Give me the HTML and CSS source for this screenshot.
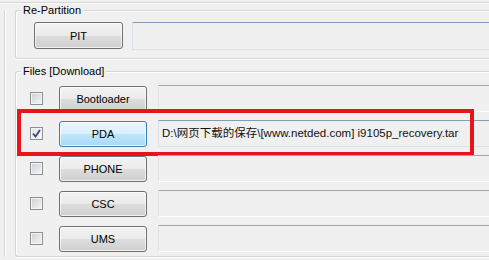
FILE: index.html
```html
<!DOCTYPE html>
<html lang="zh-CN">
<head>
  <meta charset="UTF-8">
  <title>Odin - Files</title>
  <link rel="stylesheet" href="styles.css">
</head>
<body>
  <div class="topline"></div>
  <div class="panel">
    <!-- Re-Partition -->
    <div class="group repart">
      <span class="group-title">Re-Partition</span>
      <div class="pit-row">
        <button type="button" class="btn pit">PIT</button>
        <div class="field blue"></div>
      </div>
    </div>

    <!-- Files [Download] -->
    <div class="group files">
      <span class="group-title">Files [Download]</span>
      <div class="file-row">
        <span class="check"></span>
        <button type="button" class="btn">Bootloader</button>
        <div class="field"></div>
      </div>
      <div class="file-row marked">
        <span class="check checked">
          <svg width="9" height="9" viewBox="0 0 9 9"><path d="M1 4.5 L3.5 7.5 L8 1" fill="none" stroke="#34448c" stroke-width="1.8"/></svg>
        </span>
        <button type="button" class="btn active">PDA</button>
        <div class="field blue">D:\网页下载的保存\[www.netded.com] i9105p_recovery.tar</div>
        <div class="highlight"></div>
      </div>
      <div class="file-row">
        <span class="check"></span>
        <button type="button" class="btn">PHONE</button>
        <div class="field"></div>
      </div>
      <div class="file-row">
        <span class="check"></span>
        <button type="button" class="btn">CSC</button>
        <div class="field"></div>
      </div>
      <div class="file-row">
        <span class="check"></span>
        <button type="button" class="btn">UMS</button>
        <div class="field"></div>
      </div>
    </div>
  </div>
</body>
</html>
```

FILE: styles.css
```css
/* Odin 風のパネル */
html {
  overflow: hidden;
}
body {
  margin: 0;
  background-color: #f0f0f0;
  font-family: 'Liberation Sans', 'Noto Sans CJK SC', sans-serif;
  font-size: 11px;
  color: #000;
  overflow: hidden;
  height: 260px;
}
.topline {
  height: 2px;
  border-bottom: 1px solid #d5d5d5;
  box-shadow: 0 1px 0 #fff;
}
.panel {
  margin-top: 7px;
  margin-left: 4px;
  padding-left: 10px;
  border-left: 1px solid #d5d5d5;
  box-shadow: inset 1px 0 0 #fff;
}
.group {
  position: relative;
  border: 1px solid #d5d5d5;
  border-right: none;
  border-radius: 3px 0 0 3px;
  box-shadow: inset 1px 1px 0 #fff, 0 1px 0 #fff;
}
.group-title {
  position: absolute;
  top: -7px;
  left: 5px;
  padding: 0 2px;
  line-height: 13px;
  background-color: #f0f0f0;
}
.repart {
  padding: 11px 0 8px 18px;
}
.pit-row {
  display: flex;
  align-items: flex-start;
  gap: 9px;
}
.files {
  margin-top: 12px;
  padding: 13px 0 4px 14px;
  display: flex;
  flex-direction: column;
  gap: 8px;
}
.file-row {
  position: relative;
  display: flex;
  align-items: center;
  height: 27px;
}
.btn {
  box-sizing: border-box;
  width: 89px;
  height: 27px;
  padding: 0;
  border: 1px solid #707070;
  border-radius: 3px;
  background: linear-gradient(#f2f2f2 0%, #ebebeb 50%, #dddddd 51%, #cfcfcf 100%);
  box-shadow: inset 0 0 0 1px rgba(255,255,255,0.7);
  font-family: inherit;
  font-size: 11px;
  color: #000;
}
.file-row .btn {
  width: 88px;
  height: 26px;
  margin-left: 16px;
  align-self: flex-end;
}
.btn.active {
  border-color: #3c7fb1;
  background: linear-gradient(#eaf6fd 0%, #d9f0fc 50%, #bee6fd 51%, #a7d9f5 100%);
}
.field {
  box-sizing: border-box;
  flex: 1;
  height: 28px;
  padding-left: 3px;
  border: 1px solid #e3e3e3;
  border-right: none;
  border-top-color: #a5a5a5;
  border-bottom-color: #fff;
  background-color: #f0f0f0;
  font-size: 11.5px;
  line-height: 25px;
  color: #111;
  white-space: nowrap;
  overflow: hidden;
}
.file-row .field {
  height: 27px;
  margin-left: 11px;
}
.field.blue {
  border-color: #dbe3ea;
  border-top-color: #7f9db9;
}
.check {
  box-sizing: border-box;
  width: 13px;
  height: 13px;
  border: 1px solid #8e8f8f;
  background: linear-gradient(135deg, #cbcfd5, #f6f6f6);
  box-shadow: inset 0 0 0 1px #f4f4f4;
  display: flex;
  align-items: center;
  justify-content: center;
}
.check.checked {
  background: linear-gradient(135deg, #dfe3ea, #f8f8f8);
}
.highlight {
  position: absolute;
  top: -11px;
  left: -13px;
  width: 457px;
  height: 47px;
  box-sizing: border-box;
  border: 4px solid #e8141b;
}
```
